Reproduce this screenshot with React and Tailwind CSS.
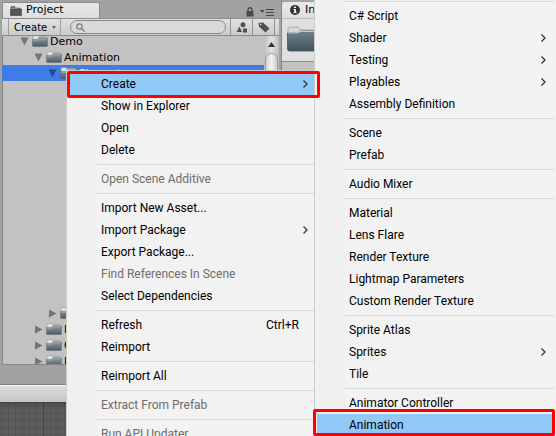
import React from "react";

const assetMenu = [
  { label: "Create", sub: true, active: true },
  { label: "Show in Explorer" },
  { label: "Open" },
  { label: "Delete" },
  null,
  { label: "Open Scene Additive", disabled: true },
  null,
  { label: "Import New Asset..." },
  { label: "Import Package", sub: true },
  { label: "Export Package..." },
  { label: "Find References In Scene", disabled: true },
  { label: "Select Dependencies" },
  null,
  { label: "Refresh", shortcut: "Ctrl+R" },
  { label: "Reimport" },
  null,
  { label: "Reimport All" },
  null,
  { label: "Extract From Prefab", disabled: true },
  null,
  { label: "Run API Updater", disabled: true },
];

const createMenu = [
  null,
  { label: "C# Script" },
  { label: "Shader", sub: true },
  { label: "Testing", sub: true },
  { label: "Playables", sub: true },
  { label: "Assembly Definition" },
  null,
  { label: "Scene" },
  { label: "Prefab" },
  null,
  { label: "Audio Mixer" },
  null,
  { label: "Material" },
  { label: "Lens Flare" },
  { label: "Render Texture" },
  { label: "Lightmap Parameters" },
  { label: "Custom Render Texture" },
  null,
  { label: "Sprite Atlas" },
  { label: "Sprites", sub: true },
  { label: "Tile" },
  null,
  { label: "Animator Controller" },
  { label: "Animation", active: true },
];

function Menu({ items, label, endPadding }) {
  return (
    <div role="menu" aria-label={label} className="font-[Roboto,sans-serif] text-[12px] leading-[22px] text-black">
      {items.map((item, i) =>
        item ? (
          <button
            key={i}
            type="button"
            role="menuitem"
            disabled={item.disabled}
            className={`flex h-[22px] w-full items-center pl-8 text-left whitespace-nowrap disabled:text-[#6d6d6d] ${endPadding} ${
              item.active ? "bg-[#91c9f7]" : ""
            }`}
          >
            <span className="flex-1">{item.label}</span>
            {item.shortcut && <span className="pr-[9px]">{item.shortcut}</span>}
            {item.sub && (
              <svg width="5" height="8" viewBox="0 0 5 8" fill="none" stroke="#333" strokeWidth="1.3">
                <path d="M.5 .5L4 4L.5 7.5" />
              </svg>
            )}
          </button>
        ) : (
          <div key={i} role="separator" className="ml-7 flex h-[7px] items-center">
            <div className="h-px w-full bg-[#d7d7d7]" />
          </div>
        )
      )}
    </div>
  );
}

function Folder({ className = "h-3 w-4" }) {
  return (
    <svg className={`shrink-0 ${className}`} viewBox="0 0 16 12" preserveAspectRatio="none">
      <defs>
        <linearGradient id="folderFront" x1="0" y1="0" x2="0" y2="1">
          <stop offset="0" stopColor="#8b999e" />
          <stop offset="1" stopColor="#4b5a60" />
        </linearGradient>
      </defs>
      <path d="M1 3V1.5Q1 .5 2 .5H5.500Q6.500 .5 6.800 1.500H14.500Q15.500 1.500 15.500 2.500V5H1Z" fill="#dcdedf" stroke="#858b8d" strokeWidth=".5" />
      <path d="M7 2.500H14.500V4H6Z" fill="#68767b" />
      <path d="M.5 4.500H6L7.500 3.500H15.500V10.500Q15.500 11.500 14.500 11.500H1.500Q.5 11.500 .5 10.500Z" fill="url(#folderFront)" stroke="#59676c" strokeWidth=".5" />
      <path d="M1 5H6.200L7.600 4H15" fill="none" stroke="#bdc6c9" strokeWidth=".6" />
    </svg>
  );
}

function LargeFolder() {
  return (
    <svg className="h-[26px] w-10 shrink-0" viewBox="0 0 40 26">
      <defs>
        <linearGradient id="largeFront" x1="0" y1="0" x2="0" y2="1">
          <stop offset="0" stopColor="#70838c" />
          <stop offset="1" stopColor="#43525a" />
        </linearGradient>
      </defs>
      <path d="M1 8V3Q1 1 4 1H10Q12 1 13 3Q14 4 16 4H38V8Z" fill="#d6d8d9" stroke="#9c9fa0" strokeWidth=".8" />
      <path d="M11 6H39V9H9Z" fill="#4f5f66" />
      <path d="M.5 7H9Q11 7 13 5.500L14 5H39.500V23Q39.500 25 37.500 25H2.500Q.5 25 .5 23Z" fill="url(#largeFront)" stroke="#47565d" strokeWidth=".8" />
      <path d="M1 7H9Q11 7 13 5.500H39" fill="none" stroke="#c3cacc" strokeWidth="1.2" />
    </svg>
  );
}

function TreeRow({ label, level, open, selected }) {
  const indent = ["pl-5", "pl-[34px]", "pl-12"][level];
  return (
    <li className={`flex h-4 items-center gap-[3px] ${indent} ${selected ? "bg-[#3e7de7] text-white" : ""}`}>
      <svg width="9" height="9" viewBox="0 0 9 9" className="shrink-0" fill={selected ? "#234b91" : "#747474"}>
        {open ? <path d="M.5 .5H8.500L4.500 8.500Z" /> : <path d="M1 .5L8.500 4.500L1 8.500Z" />}
      </svg>
      <Folder />
      <span className="-ml-px pt-px">{label}</span>
    </li>
  );
}

function ProjectPanel() {
  return (
    <section className="flex w-[277px] shrink-0 flex-col" aria-label="Project">
      <div className="flex h-[18px] shrink-0 items-end justify-between">
        <h2 className="flex h-4 w-[98px] items-center gap-1 rounded-t-xs border border-b-0 border-[#8a8a8a] bg-linear-to-b from-[#e8e8e8] to-[#dedede] pl-[7px] text-[11px]">
          <svg width="12" height="10" viewBox="0 0 12 10">
            <path d="M1 2.500V1.500Q1 .5 2 .5H4.500L5.500 2H10V3M.5 3H11.500V9.500H.5Z" fill="#555" stroke="#3c3c3c" strokeWidth=".6" />
            <path d="M2 2H9.500" stroke="#ccc" strokeWidth=".7" />
          </svg>
          Project
        </h2>
        <div className="flex items-center gap-[6px] pr-[5px] pb-px">
          <svg width="8" height="10" viewBox="0 0 8 10">
            <path d="M2 4.500V2.800a2 2 0 0 1 4 0V4.500" fill="none" stroke="#4a4a4a" strokeWidth="1.400" />
            <rect x=".5" y="4" width="7" height="5.500" fill="#4a4a4a" />
          </svg>
          <svg width="14" height="8" viewBox="0 0 14 8" fill="#444">
            <path d="M0 2H4.500L2.250 4.800ZM6 1h8v1H6ZM6 4h8v1H6ZM6 7h8v1H6Z" />
          </svg>
        </div>
      </div>
      <div className="flex h-[18px] shrink-0 items-stretch border-y border-t-[#8f8f8f] border-b-[#8a8a8a] bg-linear-to-b from-[#e2e2e2] to-[#cbcbcb]">
        <button type="button" className="ml-[6px] flex w-[53px] shrink-0 items-center justify-between border-x border-[#9d9d9d] pr-1 pl-[5px] text-[10px]">
          Create
          <svg width="4" height="3" viewBox="0 0 4 3" fill="#666">
            <path d="M0 0H4L2 3Z" />
          </svg>
        </button>
        <label className="my-px mr-1 ml-[9px] flex min-w-0 flex-1 items-center rounded-full border border-[#888] bg-[#d9d9d9] pl-[5px]">
          <svg width="9" height="9" viewBox="0 0 9 9" fill="none" stroke="#777" strokeWidth="1.200">
            <circle cx="3.500" cy="3.500" r="2.700" />
            <path d="M5.500 5.500L8.500 8.500" />
          </svg>
          <input type="search" aria-label="Search assets" className="h-3 min-w-0 flex-1 bg-transparent outline-none" />
        </label>
        <button type="button" aria-label="Search by type" className="flex w-[22px] shrink-0 items-center justify-center border-l border-[#929292]">
          <svg width="12" height="11" viewBox="0 0 12 11" fill="#505050">
            <circle cx="7" cy="2.800" r="2.500" />
            <path d="M3.500 4.500L6 10H.500ZM7 6.500H11V10.500H7Z" />
          </svg>
        </button>
        <button type="button" aria-label="Search by label" className="flex w-[23px] shrink-0 items-center justify-center border-x border-[#929292]">
          <svg width="12" height="11" viewBox="0 0 12 11">
            <path d="M.5 1L5 .5L11.500 6.500L7.500 10.500L1 4.500Z" fill="#505050" />
            <circle cx="2.700" cy="2.500" r=".8" fill="#ddd" />
          </svg>
        </button>
        <div className="w-[4px] shrink-0" />
      </div>
      <div className="flex min-h-0 flex-1 border-b border-l border-[#858585] bg-[#c2c2c2]">
        <ul className="-ml-px min-w-0 flex-1 overflow-hidden text-[11px] leading-4">
          <div className="-mt-[3px] -ml-0.5">
            <TreeRow label="Demo" level={0} open />
            <TreeRow label="Animation" level={1} open />
            <TreeRow label="Characters" level={2} open selected />
            <div className="h-56" />
            <TreeRow label="Effects" level={2} />
            <TreeRow label="Prefabs" level={1} />
            <TreeRow label="Graphics" level={1} />
            <TreeRow label="Resources" level={1} />
          </div>
        </ul>
        <div className="flex w-[15px] flex-col items-center bg-linear-to-r from-[#bdbdbd] via-[#e2e2e2] to-[#bdbdbd]">
          <svg width="7" height="5" viewBox="0 0 7 5" className="mt-[6px] shrink-0" fill="#333">
            <path d="M3.500 0L7 5H0Z" />
          </svg>
          <div className="mt-[6px] w-[13px] flex-1 rounded-t-full border border-[#999] bg-linear-to-r from-[#d5d5d5] via-[#f2f2f2] to-[#cfcfcf]" />
        </div>
      </div>
    </section>
  );
}

function InspectorPanel() {
  return (
    <section className="flex min-w-0 flex-1 flex-col border-l border-[#858585] bg-[#c2c2c2]" aria-label="Inspector">
      <div className="h-[18px] shrink-0 bg-[#a2a2a2] pt-0.5">
        <h2 className="flex h-4 w-24 items-center gap-[5px] rounded-tl-xs bg-linear-to-b from-[#e8e8e8] to-[#dedede] pl-2 text-[11px]">
          <svg width="10" height="10" viewBox="0 0 10 10" className="shrink-0">
            <circle cx="5" cy="5" r="5" fill="#333" />
            <path d="M4 1.500h2v1.500H4ZM3.500 4H6V7H6.700V8H3.500V7H4.200V5H3.500Z" fill="#eee" />
          </svg>
          Inspector
        </h2>
      </div>
      <div className="flex h-[44px] shrink-0 items-start border-y border-t-[#bdbdbd] border-b-[#8b8b8b] bg-[#dfdfdf] pt-[7px] pl-[5px]">
        <LargeFolder />
      </div>
    </section>
  );
}

function SceneGrid() {
  return (
    <svg className="block h-[34px] w-full shrink-0" aria-hidden="true">
      <defs>
        <pattern id="minorGrid" x="1" y="4" width="7" height="7" patternUnits="userSpaceOnUse">
          <path d="M0 .5H7M.5 0V7" stroke="#535353" fill="none" />
        </pattern>
        <linearGradient id="gridShade" x1="0" y1="0" x2="0" y2="1">
          <stop offset="0" stopColor="#000" stopOpacity=".25" />
          <stop offset="1" stopColor="#000" stopOpacity="0" />
        </linearGradient>
      </defs>
      <rect width="100%" height="100%" fill="#5c5c5c" />
      <rect width="100%" height="100%" fill="url(#minorGrid)" />
      <path d="M43.500 0V35" stroke="#444" />
      <rect width="100%" height="5" fill="url(#gridShade)" />
    </svg>
  );
}

export default function App() {
  return (
    <div className="relative flex h-screen flex-col overflow-hidden bg-[#a2a2a2] font-['DejaVu_Sans',Verdana,sans-serif] text-black">
      <main className="flex min-h-0 flex-1 gap-[2px] pl-0.5">
        <ProjectPanel />
        <InspectorPanel />
      </main>
      <div className="h-5 shrink-0 border-b border-[#828282]" />
      <div className="h-[17px] shrink-0 border-t border-[#f4f4f4] bg-linear-to-b from-[#dedede] to-[#c4c4c4]" />
      <SceneGrid />

      <div className="absolute top-[70px] left-[66px] h-[400px] w-[249px] border border-[#cccccc] bg-[#f1f1f1] bg-linear-to-r from-[#f0f0f0] from-[30px] to-[#f2f2f2] to-[30px] pt-0.5 pl-0.5">
        <Menu items={assetMenu} label="Assets" endPadding="pr-[6px]" />
      </div>
      <div className="absolute -top-0.5 right-0 left-[314px] h-[500px] border-l border-[#cccccc] bg-linear-to-r from-[#f0f0f0] from-[30px] to-[#f2f2f2] to-[30px] pr-px pl-0.5">
        <Menu items={createMenu} label="Create" endPadding="pr-[9px]" />
      </div>
      <div className="pointer-events-none absolute top-[71px] left-[67px] h-[27px] w-[253px] rounded-xs border-3 border-[#ff0000]" />
      <div className="pointer-events-none absolute right-px bottom-0 left-[313px] h-[27px] rounded-xs border-3 border-[#ff0000]" />
    </div>
  );
}
